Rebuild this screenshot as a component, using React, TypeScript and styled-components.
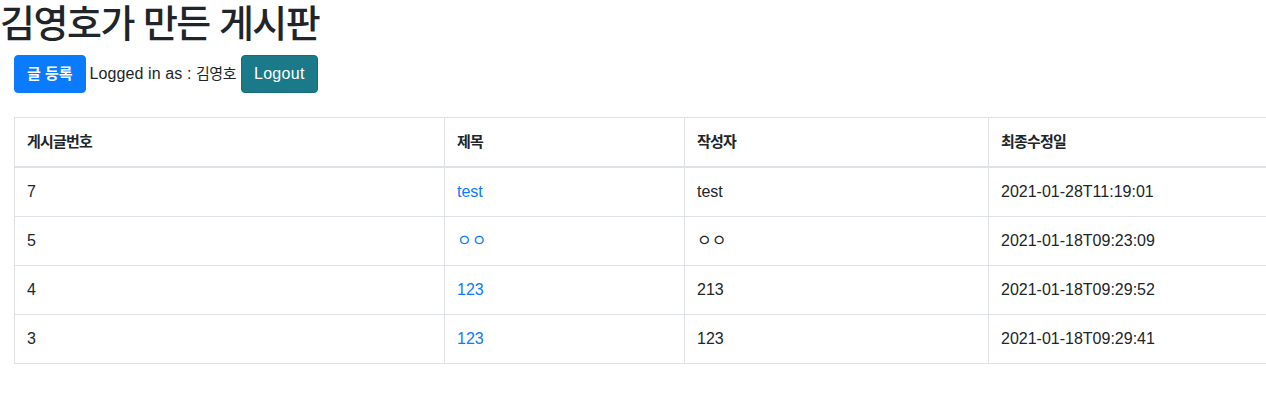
import React from "react";
import styled, { createGlobalStyle } from "styled-components";

const GlobalStyle = createGlobalStyle`
  html, body {
    margin: 0;
    padding: 0;
    overflow: hidden;
    background: #fff;
  }
  body {
    font-family: "Liberation Sans", "Noto Sans CJK KR", sans-serif;
    font-size: 16px;
    line-height: 1.5;
    color: #212529;
  }
`;

const Wrapper = styled.div`
  width: 1300px;
`;

const Title = styled.h1`
  margin: 0 0 7px;
  font-size: 38px;
  line-height: 48px;
  font-weight: 500;
  letter-spacing: -1.5px;
  color: #212529;
`;

const Toolbar = styled.div`
  display: flex;
  align-items: baseline;
  gap: 4px;
  margin-left: 14px;
`;

const Button = styled.button<{ $variant: "primary" | "info" }>`
  font-family: inherit;
  font-size: ${(p) => (p.$variant === "primary" ? "15px" : "16px")};
  font-weight: ${(p) => (p.$variant === "primary" ? 700 : 400)};
  line-height: 24px;
  padding: 6px 12px;
  height: 38px;
  border-radius: 4px;
  color: #fff;
  cursor: pointer;
  letter-spacing: ${(p) => (p.$variant === "primary" ? "0" : "0.3px")};
  background: ${(p) => (p.$variant === "primary" ? "#0b7bfe" : "#1a7a89")};
  border: 1px solid ${(p) => (p.$variant === "primary" ? "#0b7bfe" : "#166c79")};
`;

const UserText = styled.span`
  font-size: 16px;
  letter-spacing: 0.1px;
  margin-right: 1px;
`;

const Korean = styled.span`
  font-size: 15px;
  letter-spacing: -0.5px;
`;

const Table = styled.table`
  margin: 24px 0 0 14px;
  border-collapse: collapse;
  table-layout: fixed;
`;

const HeadCell = styled.th<{ $width: number }>`
  box-sizing: border-box;
  width: ${(p) => p.$width}px;
  text-align: left;
  padding: 12px;
  line-height: 24px;
  font-size: 15px;
  font-weight: 700;
  letter-spacing: -0.8px;
  border: 1px solid #dee2e6;
  border-bottom: 2px solid #dee2e6;
`;

const Cell = styled.td`
  padding: 12px;
  line-height: 24px;
  height: 24px;
  font-size: 16px;
  border: 1px solid #dee2e6;
`;

const Link = styled.a`
  color: #0b7bfe;
  text-decoration: none;
`;

const columns = [
  { label: "게시글번호", width: 430 },
  { label: "제목", width: 240 },
  { label: "작성자", width: 304 },
  { label: "최종수정일", width: 300 },
];

const posts = [
  { id: 7, title: "test", author: "test", updated: "2021-01-28T11:19:01" },
  { id: 5, title: "ㅇㅇ", author: "ㅇㅇ", updated: "2021-01-18T09:23:09" },
  { id: 4, title: "123", author: "213", updated: "2021-01-18T09:29:52" },
  { id: 3, title: "123", author: "123", updated: "2021-01-18T09:29:41" },
];

export default function App() {
  return (
    <Wrapper>
      <GlobalStyle />
      <Title>김영호가 만든 게시판</Title>
      <Toolbar>
        <Button $variant="primary">글 등록</Button>
        <UserText>
          Logged in as : <Korean>김영호</Korean>
        </UserText>
        <Button $variant="info">Logout</Button>
      </Toolbar>
      <Table>
        <thead>
          <tr>
            {columns.map((c) => (
              <HeadCell key={c.label} $width={c.width}>
                {c.label}
              </HeadCell>
            ))}
          </tr>
        </thead>
        <tbody>
          {posts.map((post) => (
            <tr key={post.id}>
              <Cell>{post.id}</Cell>
              <Cell>
                <Link href="#">{post.title}</Link>
              </Cell>
              <Cell>{post.author}</Cell>
              <Cell>{post.updated}</Cell>
            </tr>
          ))}
        </tbody>
      </Table>
    </Wrapper>
  );
}
